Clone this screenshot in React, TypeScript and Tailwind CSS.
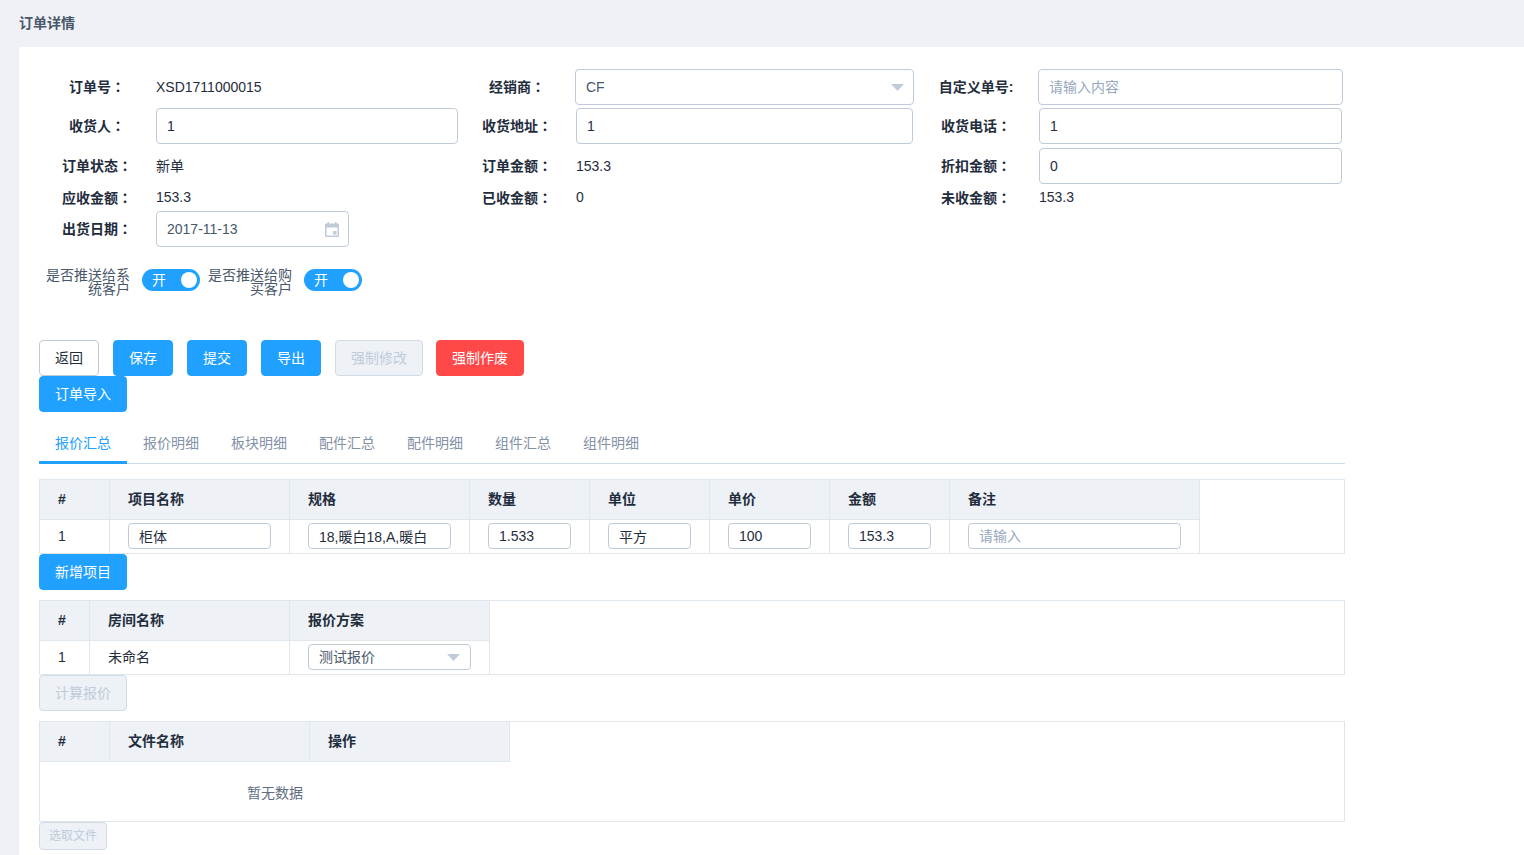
import React from "react";

const inputBase =
  "h-9 rounded border border-[#bfcbd9] bg-white px-2.5 text-sm text-[#1f2d3d] placeholder:text-[#97a8be] outline-none";
const smallInput =
  "h-[26px] rounded border border-[#bfcbd9] bg-white px-2.5 text-sm text-[#1f2d3d] placeholder:text-[#97a8be] outline-none block";

function Caret() {
  return (
    <svg width="13" height="7" viewBox="0 0 13 7" className="shrink-0">
      <path d="M0 0H13L6.5 7Z" fill="#bfcbd9" />
    </svg>
  );
}

function Label({ w, text, ascii }: { w: string; text: string; ascii?: boolean }) {
  return (
    <div className={`${w} shrink-0 text-center text-sm font-bold text-[#1f2d3d] ${ascii ? "" : "pb-0.5"}`}>
      {text}
      {ascii ? ":" : <span className="font-['Noto_Sans_CJK_TC']">：</span>}
    </div>
  );
}

function Btn({ children, kind }: { children: React.ReactNode; kind: "primary" | "default" | "disabled" | "danger" }) {
  const map = {
    primary: "bg-[#20a0ff] border-[#20a0ff] text-white",
    default: "bg-white border-[#bfcbd9] text-[#1f2d3d]",
    disabled: "bg-[#eef1f6] border-[#d1dbe5] text-[#bfcbd9]",
    danger: "bg-[#ff4949] border-[#ff4949] text-white",
  };
  return (
    <button className={`${map[kind]} block h-9 shrink-0 rounded border px-[15px] text-sm`}>{children}</button>
  );
}

function Th({ children, w }: { children: React.ReactNode; w: string }) {
  return (
    <div
      className={`${w} flex h-10 shrink-0 items-center border-r border-b border-[#dfe6ec] bg-[#eef1f6] pb-0.5 pl-[18px] text-sm font-bold text-[#1f2d3d]`}
    >
      {children}
    </div>
  );
}

function Td({ children, w }: { children: React.ReactNode; w: string }) {
  return (
    <div
      className={`${w} flex h-[33px] shrink-0 items-center border-r border-[#dfe6ec] pb-px pl-[18px] text-sm text-[#1f2d3d]`}
    >
      {children}
    </div>
  );
}

const tabs = ["报价汇总", "报价明细", "板块明细", "配件汇总", "配件明细", "组件汇总", "组件明细"];

const t1 = [
  { t: "项目名称", w: "w-[180px]", iw: "w-[143px]", v: "柜体" },
  { t: "规格", w: "w-[180px]", iw: "w-[143px]", v: "18,暖白18,A,暖白" },
  { t: "数量", w: "w-[120px]", iw: "w-[83px]", v: "1.533" },
  { t: "单位", w: "w-[120px]", iw: "w-[83px]", v: "平方" },
  { t: "单价", w: "w-[120px]", iw: "w-[83px]", v: "100" },
  { t: "金额", w: "w-[120px]", iw: "w-[83px]", v: "153.3" },
  { t: "备注", w: "w-[250px]", iw: "w-[213px]", v: "" },
];

function Switch() {
  return (
    <div className="mb-1 flex h-[22px] w-[58px] shrink-0 items-center justify-between rounded-full bg-[#20a0ff] pl-2.5 pr-[3px] text-sm text-white">
      <span>开</span>
      <span className="h-4 w-4 rounded-full bg-white" />
    </div>
  );
}

export default function App() {
  return (
    <div className="min-h-screen overflow-hidden bg-[#eff1f6] font-['Liberation_Sans','Noto_Sans_CJK_SC',sans-serif]">
      <div className="flex h-[47px] items-center pb-0.5 pl-[19px] text-sm font-bold text-[#48576a]">订单详情</div>
      <div className="ml-[19px] h-[808px] overflow-hidden bg-white pl-5 pt-[22px]">
        <div className="w-[1306px]">
          <div className="grid h-[39px] grid-cols-[431px_456px_419px]">
            <div className="flex h-9 items-center">
              <Label w="w-[116px]" text="订单号" />
              <span className="ml-px text-sm text-[#1f2d3d]">XSD1711000015</span>
            </div>
            <div className="flex h-9 items-center">
              <Label w="w-[94px]" text="经销商" />
              <div className="ml-[11px] flex h-9 w-[339px] items-center justify-between rounded border border-[#bfcbd9] pl-2.5 pr-[9px] text-sm text-[#48576a]">
                <span>CF</span>
                <Caret />
              </div>
            </div>
            <div className="flex h-9 items-center">
              <Label w="w-[100px]" text="自定义单号" ascii />
              <input readOnly placeholder="请输入内容" className={`${inputBase} ml-3 w-[305px]`} />
            </div>
          </div>
          <div className="grid h-10 grid-cols-[431px_456px_419px]">
            <div className="flex h-9 items-center">
              <Label w="w-[116px]" text="收货人" />
              <input readOnly value="1" className={`${inputBase} ml-px w-[302px]`} />
            </div>
            <div className="flex h-9 items-center">
              <Label w="w-[94px]" text="收货地址" />
              <input readOnly value="1" className={`${inputBase} ml-3 w-[337px]`} />
            </div>
            <div className="flex h-9 items-center">
              <Label w="w-[100px]" text="收货电话" />
              <input readOnly value="1" className={`${inputBase} ml-[13px] w-[303px]`} />
            </div>
          </div>
          <div className="grid h-9 grid-cols-[431px_456px_419px]">
            <div className="flex items-center">
              <Label w="w-[116px]" text="订单状态" />
              <span className="ml-px text-sm text-[#1f2d3d]">新单</span>
            </div>
            <div className="flex items-center">
              <Label w="w-[94px]" text="订单金额" />
              <span className="ml-3 text-sm text-[#1f2d3d]">153.3</span>
            </div>
            <div className="flex items-center">
              <Label w="w-[100px]" text="折扣金额" />
              <input readOnly value="0" className={`${inputBase} ml-[13px] w-[303px]`} />
            </div>
          </div>
          <div className="grid h-[27px] grid-cols-[431px_456px_419px] pt-px">
            <div className="flex items-center">
              <Label w="w-[116px]" text="应收金额" />
              <span className="ml-px pb-0.5 text-sm text-[#1f2d3d]">153.3</span>
            </div>
            <div className="flex items-center">
              <Label w="w-[94px]" text="已收金额" />
              <span className="ml-3 pb-0.5 text-sm text-[#1f2d3d]">0</span>
            </div>
            <div className="flex items-center">
              <Label w="w-[100px]" text="未收金额" />
              <span className="ml-[13px] pb-0.5 text-sm text-[#1f2d3d]">153.3</span>
            </div>
          </div>
          <div className="flex h-9 items-center">
            <Label w="w-[116px]" text="出货日期" />
            <div className="ml-px flex h-9 w-[193px] items-center justify-between rounded border border-[#bfcbd9] pl-2.5 pr-[9px] text-sm text-[#48576a]">
              <span>2017-11-13</span>
              <svg width="14" height="15" viewBox="0 0 14 15" className="shrink-0">
                <path
                  fillRule="evenodd"
                  d="M1 1.5h1.5V0H4v1.5h6V0h1.5v1.5H13a1 1 0 0 1 1 1V14a1 1 0 0 1-1 1H1a1 1 0 0 1-1-1V2.5a1 1 0 0 1 1-1ZM1.5 5.5v8h11v-8Z"
                  fill="#bfcbd9"
                />
                <rect x="8" y="9" width="3.5" height="3.5" fill="#bfcbd9" />
              </svg>
            </div>
          </div>

          <div className="mt-5 flex h-[30px] items-center">
            <div className="ml-[7px] w-[84px] shrink-0 text-right text-sm leading-[14px] text-[#48576a]">是否推送给系统客户</div>
            <div className="ml-3">
              <Switch />
            </div>
            <div className="ml-2 w-[84px] shrink-0 text-right text-sm leading-[14px] text-[#48576a]">是否推送给购买客户</div>
            <div className="ml-3">
              <Switch />
            </div>
          </div>

          <div className="mt-[43px] flex h-9 items-start gap-[14px]">
            <Btn kind="default">返回</Btn>
            <Btn kind="primary">保存</Btn>
            <Btn kind="primary">提交</Btn>
            <Btn kind="primary">导出</Btn>
            <Btn kind="disabled">强制修改</Btn>
            <div className="-ml-px">
              <Btn kind="danger">强制作废</Btn>
            </div>
          </div>
          <div className="flex">
            <Btn kind="primary">订单导入</Btn>
          </div>

          <div className="mt-3 flex h-[40px] border-b border-[#d1dbe5]">
            {tabs.map((t, i) => (
              <div
                key={t}
                className={`flex h-10 w-[88px] items-center justify-center border-b-[3px] pt-px text-sm ${
                  i === 0 ? "border-[#20a0ff] text-[#20a0ff]" : "border-transparent text-[#8391a5]"
                }`}
              >
                {t}
              </div>
            ))}
          </div>

          <div className="mt-[15px] border border-[#dfe6ec]">
            <div className="flex">
              <Th w="w-[70px]">#</Th>
              {t1.map((c) => (
                <Th key={c.t} w={c.w}>{c.t}</Th>
              ))}
            </div>
            <div className="flex">
              <Td w="w-[70px]">1</Td>
              {t1.map((c) => (
                <Td key={c.t} w={c.w}>
                  {c.v ? (
                    <input readOnly value={c.v} className={`${smallInput} ${c.iw}`} />
                  ) : (
                    <input readOnly placeholder="请输入" className={`${smallInput} ${c.iw}`} />
                  )}
                </Td>
              ))}
            </div>
          </div>
          <div className="flex">
            <Btn kind="primary">新增项目</Btn>
          </div>

          <div className="mt-2.5 border border-[#dfe6ec]">
            <div className="flex">
              <Th w="w-[50px]">#</Th>
              <Th w="w-[200px]">房间名称</Th>
              <Th w="w-[200px]">报价方案</Th>
            </div>
            <div className="flex">
              <Td w="w-[50px]">1</Td>
              <Td w="w-[200px]">未命名</Td>
              <Td w="w-[200px]">
                <div className="flex h-[26px] w-[163px] items-center justify-between rounded border border-[#bfcbd9] pl-2.5 pr-2.5 text-sm text-[#48576a]">
                  <span>测试报价</span>
                  <Caret />
                </div>
              </Td>
            </div>
          </div>
          <div className="flex">
            <Btn kind="disabled">计算报价</Btn>
          </div>

          <div className="mt-2.5 border border-[#dfe6ec]">
            <div className="flex">
              <Th w="w-[70px]">#</Th>
              <Th w="w-[200px]">文件名称</Th>
              <Th w="w-[200px]">操作</Th>
            </div>
            <div className="flex h-[59px] w-[470px] items-center justify-center pt-0.5 text-sm text-[#5e6d82]">暂无数据</div>
          </div>
          <div className="flex">
            <button className="h-7 w-[68px] rounded border border-[#d1dbe5] bg-[#eef1f6] text-xs text-[#bfcbd9]">选取文件</button>
          </div>
        </div>
      </div>
    </div>
  );
}
